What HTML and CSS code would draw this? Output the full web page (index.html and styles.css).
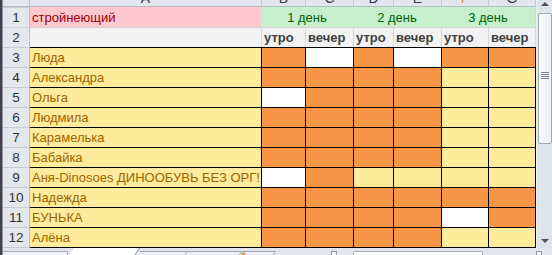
FILE: index.html
```html
<!DOCTYPE html>
<html lang="ru">
<head>
<meta charset="utf-8">
<title>Sheet</title>
<link rel="stylesheet" href="styles.css">
</head>
<body>
<div class="app">
  <div class="edge"></div>
  <div class="main">
    <div class="sheet-area">
      <div class="grid">
        <div class="hdr corner"></div>
        <div class="hdr"><span>A</span></div>
        <div class="hdr hsep"><span>B</span></div>
        <div class="hdr hsep"><span>C</span></div>
        <div class="hdr hsep"><span>D</span></div>
        <div class="hdr hsep"><span>E</span></div>
        <div class="hdr hsep sel"><span>F</span></div>
        <div class="hdr hsep hlast"><span>G</span></div>

        <div class="rh">1</div>
        <div class="cell bad">стройнеющий</div>
        <div class="cell good span2">1 день</div>
        <div class="cell good span2">2 день</div>
        <div class="cell good span2 glast">3 день</div>

        <div class="rh r2">2</div>
        <div class="cell out r2"></div>
        <div class="cell out r2 vl">утро</div>
        <div class="cell out r2 vl">вечер</div>
        <div class="cell out r2 vl">утро</div>
        <div class="cell out r2 vl">вечер</div>
        <div class="cell out r2 vl">утро</div>
        <div class="cell out r2 vl glast">вечер</div>

        <div class="rh">3</div>
        <div class="cell nm">Люда</div>
        <div class="cell d o"></div><div class="cell d w"></div><div class="cell d o"></div><div class="cell d w"></div><div class="cell d o"></div><div class="cell d o gl"></div>

        <div class="rh">4</div>
        <div class="cell nm">Александра</div>
        <div class="cell d o"></div><div class="cell d o"></div><div class="cell d o"></div><div class="cell d o"></div><div class="cell d y"></div><div class="cell d y gl"></div>

        <div class="rh">5</div>
        <div class="cell nm">Ольга</div>
        <div class="cell d w"></div><div class="cell d o"></div><div class="cell d o"></div><div class="cell d o"></div><div class="cell d y"></div><div class="cell d y gl"></div>

        <div class="rh">6</div>
        <div class="cell nm">Людмила</div>
        <div class="cell d o"></div><div class="cell d o"></div><div class="cell d o"></div><div class="cell d o"></div><div class="cell d y"></div><div class="cell d y gl"></div>

        <div class="rh">7</div>
        <div class="cell nm">Карамелька</div>
        <div class="cell d o"></div><div class="cell d o"></div><div class="cell d o"></div><div class="cell d o"></div><div class="cell d y"></div><div class="cell d y gl"></div>

        <div class="rh">8</div>
        <div class="cell nm">Бабайка</div>
        <div class="cell d o"></div><div class="cell d o"></div><div class="cell d o"></div><div class="cell d o"></div><div class="cell d y"></div><div class="cell d y gl"></div>

        <div class="rh">9</div>
        <div class="cell nm">Аня-Dinosoes ДИНООБУВЬ БЕЗ ОРГ!</div>
        <div class="cell d w"></div><div class="cell d o"></div><div class="cell d y"></div><div class="cell d y"></div><div class="cell d y"></div><div class="cell d y gl"></div>

        <div class="rh">10</div>
        <div class="cell nm">Надежда</div>
        <div class="cell d o"></div><div class="cell d o"></div><div class="cell d o"></div><div class="cell d o"></div><div class="cell d o"></div><div class="cell d o gl"></div>

        <div class="rh">11</div>
        <div class="cell nm">БУНЬКА</div>
        <div class="cell d o"></div><div class="cell d o"></div><div class="cell d o"></div><div class="cell d o"></div><div class="cell d w"></div><div class="cell d o gl"></div>

        <div class="rh last">12</div>
        <div class="cell nm last">Алёна</div>
        <div class="cell d o last"></div><div class="cell d o last"></div><div class="cell d o last"></div><div class="cell d o last"></div><div class="cell d y last"></div><div class="cell d y gl last"></div>
      </div>
      <div class="vscroll">
        <div class="sbtn"><span class="tri-up"></span></div>
        <div class="thumb"><span class="grip"></span></div>
        <div class="track"></div>
        <div class="sbtn down"><span class="tri-down"></span></div>
      </div>
    </div>
    <div class="tabbar">
      <div class="nav"></div>
      <div class="tab active"></div>
      <div class="tab t2"></div>
      <div class="tab t3"></div>
      <div class="tab t4"><span class="newmark">*</span></div>
      <div class="fill f1"></div>
      <div class="split"></div>
      <div class="fill f2"></div>
      <div class="hthumb"></div>
      <div class="fill f3"></div>
      <div class="split"></div>
      <div class="fill"></div>
    </div>
  </div>
</div>
</body>
</html>
```
FILE: styles.css
```css
html, body {
  margin: 0;
  padding: 0;
  background: #ffffff;
}
body {
  width: 552px;
  height: 255px;
  overflow: hidden;
  font-family: "Liberation Sans", Arial, sans-serif;
  font-size: 13px;
}
.app {
  display: flex;
  width: 552px;
  height: 255px;
}
.edge {
  width: 2px;
  flex: none;
  background: #45404d;
  border-right: 1px solid #8d909a;
}
.main {
  flex: 1;
  display: flex;
  flex-direction: column;
  min-width: 0;
}
.sheet-area {
  display: flex;
  height: 248px;
  flex: none;
}
.grid {
  display: grid;
  grid-template-columns: 27px 231px 44px 48px 40px 48px 47px 48px;
  grid-template-rows: 7px 20px repeat(10, 20px) 21px;
  width: 533px;
  flex: none;
}
.grid > div {
  box-sizing: border-box;
  overflow: hidden;
  white-space: nowrap;
}
/* column headers */
.hdr {
  background: #e3e7ed;
  border-bottom: 1px solid #b4bcc7;
  color: #333a44;
  text-align: center;
  font-size: 14px;
}
.hdr span {
  display: block;
  line-height: 20px;
  margin-top: -12px;
}
.hsep { border-left: 1px solid #c3c9d1; }
.hlast { border-right: 1px solid #c3c9d1; }
.sel span { color: #d98a3a; }
.corner {
  border-right: 1px solid #b9c0ca;
}
/* row headers */
.rh {
  background: #e4e7ec;
  border-right: 1px solid #b9c0ca;
  border-top: 1px solid #c7ccd4;
  color: #2e3238;
  text-align: center;
  line-height: 20px;
  font-size: 13.5px;
}
.rh.last { border-bottom: 1px solid #c7ccd4; line-height: 19px; }
/* cells */
.cell {
  line-height: 20px;
  padding-left: 2px;
}
.bad {
  background: #ffc7ce;
  color: #9c0006;
  line-height: 21px;
}
.good {
  background: #c6efce;
  color: #006100;
  text-align: center;
  line-height: 21px;
  padding-left: 0;
}
.span2 { grid-column: span 2; }
.out {
  background: #f2f2f2;
  color: #3f3f3f;
  font-weight: bold;
  font-size: 13px;
}
.r2 { border-top: 1px solid #d0d4da; }
.vl { border-left: 1px solid #d4d8dd; }
.glast { border-right: 1px solid #d4d8dd; }
.nm {
  background: #ffeb9c;
  color: #9c6500;
  border-top: 1px solid #000;
}
.d {
  border-top: 1px solid #000;
  border-left: 1px solid #000;
}
.gl { border-right: 1px solid #000; }
.last { border-bottom: 1px solid #000; }
.o { background: #f79646; }
.y { background: #ffeb9c; }
.w { background: #ffffff; }
/* vertical scrollbar */
.vscroll {
  flex: 1;
  box-sizing: border-box;
  border-left: 1px solid #eef0f3;
  background: #dfe3ea;
  display: flex;
  flex-direction: column;
}
.sbtn {
  height: 13px;
  flex: none;
  display: flex;
  justify-content: center;
  padding-top: 2px;
  box-sizing: border-box;
}
.sbtn.down {
  padding-top: 4px;
}
.tri-up {
  width: 0;
  height: 0;
  border-left: 4px solid transparent;
  border-right: 4px solid transparent;
  border-bottom: 4px solid #4e5157;
}
.tri-down {
  width: 0;
  height: 0;
  border-left: 4px solid transparent;
  border-right: 4px solid transparent;
  border-top: 4px solid #4e5157;
}
.thumb {
  height: 131px;
  flex: none;
  box-sizing: border-box;
  margin: 0 0 0 1px;
  border: 1px solid #9fa7b2;
  border-radius: 2px;
  background: linear-gradient(to right, #fbfcfd, #eceff3);
  display: flex;
  justify-content: center;
  align-items: center;
}
.grip {
  width: 8px;
  height: 7px;
  background: repeating-linear-gradient(to bottom, #7d838c 0 1px, transparent 1px 2px);
  margin-top: -6px;
}
.track { flex: 1; }
/* tab bar */
.tabbar {
  flex: 1;
  display: flex;
  background: #e2e6ec;
  overflow: hidden;
}
.nav {
  width: 64px;
  flex: none;
  margin-top: 3px;
  border-top: 1px solid #a4abb5;
  border-right: 1px solid #a4abb5;
  background: #eef0f3;
}
.tab {
  flex: none;
  box-sizing: border-box;
  height: 12px;
  transform: skewX(-35deg);
}
.tab.active {
  width: 66px;
  background: #ffffff;
  border-right: 1px solid #7f8894;
  margin-left: 2px;
}
.tab.t2 { width: 48px; margin-top: 3px; border-top: 1px solid #9ea6b1; border-right: 1px solid #9ea6b1; background: #eceff3; }
.tab.t3 { width: 54px; margin-top: 3px; border-top: 1px solid #9ea6b1; border-right: 1px solid #9ea6b1; background: #eceff3; }
.tab.t4 { width: 34px; margin-top: 3px; border-top: 1px solid #9ea6b1; border-right: 1px solid #9ea6b1; background: #eceff3; }
.newmark {
  display: block;
  transform: skewX(35deg);
  color: #e8862a;
  font-size: 12px;
  font-weight: bold;
  line-height: 12px;
  margin-left: 3px;
  margin-top: -1px;
}
.fill { flex: none; }
.f1 { width: 59px; }
.f2 { width: 16px; }
.f3 { width: 53px; }
.fill:last-child { flex: 1; }
.split {
  width: 6px;
  flex: none;
  box-sizing: border-box;
  margin-top: 3px;
  border: 1px solid #8f98a4;
  border-bottom: none;
  background: #f3f4f6;
}
.hthumb {
  width: 130px;
  flex: none;
  box-sizing: border-box;
  margin-top: 3px;
  border: 1px solid #a8b0ba;
  border-bottom: none;
  border-radius: 2px 2px 0 0;
  background: #fbfcfd;
}
```
